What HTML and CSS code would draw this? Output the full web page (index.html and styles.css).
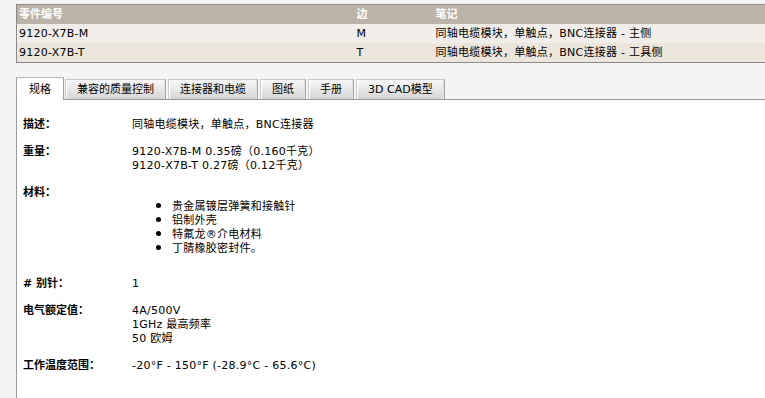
FILE: index.html
```html
<!DOCTYPE html>
<html lang="zh">
<head>
<meta charset="utf-8">
<title>9120-X7B</title>
<link rel="stylesheet" href="styles.css">
</head>
<body>
<div class="page">
  <table class="parts">
    <colgroup><col class="c1"><col class="c2"><col class="c3"></colgroup>
    <thead>
      <tr><th>零件编号</th><th>边</th><th>笔记</th></tr>
    </thead>
    <tbody>
      <tr class="odd"><td>9120-X7B-M</td><td>M</td><td>同轴电缆模块，单触点，BNC连接器 - 主侧</td></tr>
      <tr class="even"><td>9120-X7B-T</td><td>T</td><td>同轴电缆模块，单触点，BNC连接器 - 工具侧</td></tr>
    </tbody>
  </table>

  <div class="tabs">
    <div class="tab active">规格</div>
    <div class="tab">兼容的质量控制</div>
    <div class="tab">连接器和电缆</div>
    <div class="tab">图纸</div>
    <div class="tab">手册</div>
    <div class="tab">3D CAD模型</div>
  </div>

  <div class="panel">
    <dl class="specs">
      <dt>描述：</dt>
      <dd>同轴电缆模块，单触点，BNC连接器</dd>
      <dt>重量：</dt>
      <dd>9120-X7B-M 0.35磅（0.160千克）<br>9120-X7B-T 0.27磅（0.12千克）</dd>
      <dt>材料：</dt>
      <dd>
        <ul>
          <li>贵金属镀层弹簧和接触针</li>
          <li>铝制外壳</li>
          <li>特氟龙®介电材料</li>
          <li>丁腈橡胶密封件。</li>
        </ul>
      </dd>
      <dt># 别针：</dt>
      <dd>1</dd>
      <dt>电气额定值：</dt>
      <dd>4A/500V<br>1GHz 最高频率<br>50 欧姆</dd>
      <dt>工作温度范围：</dt>
      <dd>-20°F - 150°F (-28.9°C - 65.6°C)</dd>
    </dl>
  </div>
</div>
</body>
</html>
```

FILE: styles.css
```css
html, body {
  margin: 0;
  padding: 0;
  overflow: hidden;
  background: #f4f4f4;
}

body {
  font-family: "DejaVu Sans", "Noto Sans CJK SC", sans-serif;
  font-size: 11px;
  letter-spacing: 0.25px;
  color: #000;
}

.page {
  width: 800px;
  padding: 4px 0 0 16px;
}

.parts {
  width: 800px;
  border-collapse: collapse;
  table-layout: fixed;
  border: 1px solid #8a8a8a;
}

.parts .c1 { width: 338px; }
.parts .c2 { width: 79px; }

.parts th,
.parts td {
  height: 19px;
  padding: 0 0 0 2px;
  text-align: left;
  line-height: 19px;
  white-space: nowrap;
}

.parts th {
  background: #bbb3a7;
  color: #fff;
  font-weight: bold;
  letter-spacing: 0;
}

.parts .odd td { background: #f1eee9; }
.parts .even td { background: #ece5dc; }

.tabs {
  display: flex;
  align-items: flex-end;
  gap: 2px;
  margin-top: 14px;
  border-bottom: 1px solid #9a9a9a;
  width: 784px;
}

.tab {
  box-sizing: border-box;
  height: 20px;
  line-height: 20px;
  padding: 0 11px;
  border: 1px solid #c8c8c8;
  border-bottom: none;
  border-right-color: #a4a4a4;
  background: linear-gradient(#f7f7f7, #e6e6e6 55%, #d4d4d4);
  box-shadow: inset 1px 0 0 #ffffff, inset -1px 0 0 #e2e2e2;
  white-space: nowrap;
  letter-spacing: 0;
}

.tab.active {
  height: 23px;
  line-height: 24px;
  margin-bottom: -1px;
  padding: 0 12px 0 12px;
  background: #fff;
  border-color: #a0a0a0;
  border-top-color: #b8b8b8;
  box-shadow: none;
  margin-right: -1px;
}

.panel {
  background: #fff;
  border-left: 1px solid #9a9a9a;
  min-height: 320px;
  padding: 18px 0 0 6px;
  width: 778px;
}

.specs {
  display: grid;
  grid-template-columns: 109px 1fr;
  row-gap: 13px;
  margin: 0;
  line-height: 14px;
}

.specs dt {
  font-weight: bold;
  letter-spacing: 0;
}

.specs dd {
  margin: 0;
}

.specs ul {
  margin: 12px 0 10px 0;
  padding-left: 40px;
}

.specs li {
  height: 14px;
}

.specs li::marker {
  font-size: 15px;
  line-height: 14px;
}
```
